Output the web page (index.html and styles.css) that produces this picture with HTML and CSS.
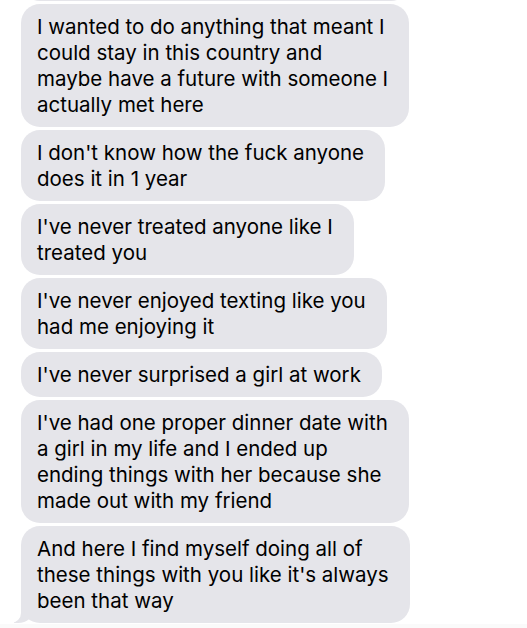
FILE: index.html
```html
<!DOCTYPE html>
<html lang="en">
  <head>
    <meta charset="UTF-8" />
    <meta name="viewport" content="width=device-width, initial-scale=1.0" />
    <title>Messages</title>
    <link rel="stylesheet" href="styles.css">
  </head>
  <body>
    <div class="thread">
      <div class="bubble bubble-cut"></div>
      <div class="bubble">I wanted to do anything that meant I<br>could stay in this country and<br>maybe have a future with someone I<br>actually met here</div>
      <div class="bubble">I don't know how the fuck anyone<br>does it in 1 year</div>
      <div class="bubble">I've never treated anyone like I<br>treated you</div>
      <div class="bubble">I've never enjoyed texting like you<br>had me enjoying it</div>
      <div class="bubble">I've never surprised a girl at work</div>
      <div class="bubble">I've had one proper dinner date with<br>a girl in my life and I ended up<br>ending things with her because she<br>made out with my friend</div>
      <div class="bubble tail">And here I find myself doing all of<br>these things with you like it's always<br>been that way</div>
    </div>
    <div class="composer"></div>
  </body>
</html>
```

FILE: styles.css
```css
body {
  margin: 0;
  background: #fff;
  font-family: "Inter", "Liberation Sans", sans-serif;
  overflow: hidden;
}
.thread {
  display: flex;
  flex-direction: column;
  align-items: flex-start;
  gap: 3px;
  padding: 0 0 0 21px;
}
.bubble {
  position: relative;
  box-sizing: border-box;
  padding: 10px 21px 9px 16px;
  background-color: #e5e5ea;
  border-radius: 19px;
  color: #000;
  font-size: 20.5px;
  line-height: 26px;
  white-space: nowrap;
}
.bubble-cut {
  width: 389px;
  height: 41px;
  margin-top: -40px;
}
.tail::before {
  content: "";
  position: absolute;
  left: -7px;
  bottom: 0;
  width: 20px;
  height: 20px;
  background-color: #e5e5ea;
  border-bottom-right-radius: 16px 14px;
}
.tail::after {
  content: "";
  position: absolute;
  left: -26px;
  bottom: 0;
  width: 26px;
  height: 20px;
  background-color: #fff;
  border-bottom-right-radius: 10px;
}
.composer {
  margin-top: 1px;
  height: 20px;
  background-color: #fafafa;
}
```
